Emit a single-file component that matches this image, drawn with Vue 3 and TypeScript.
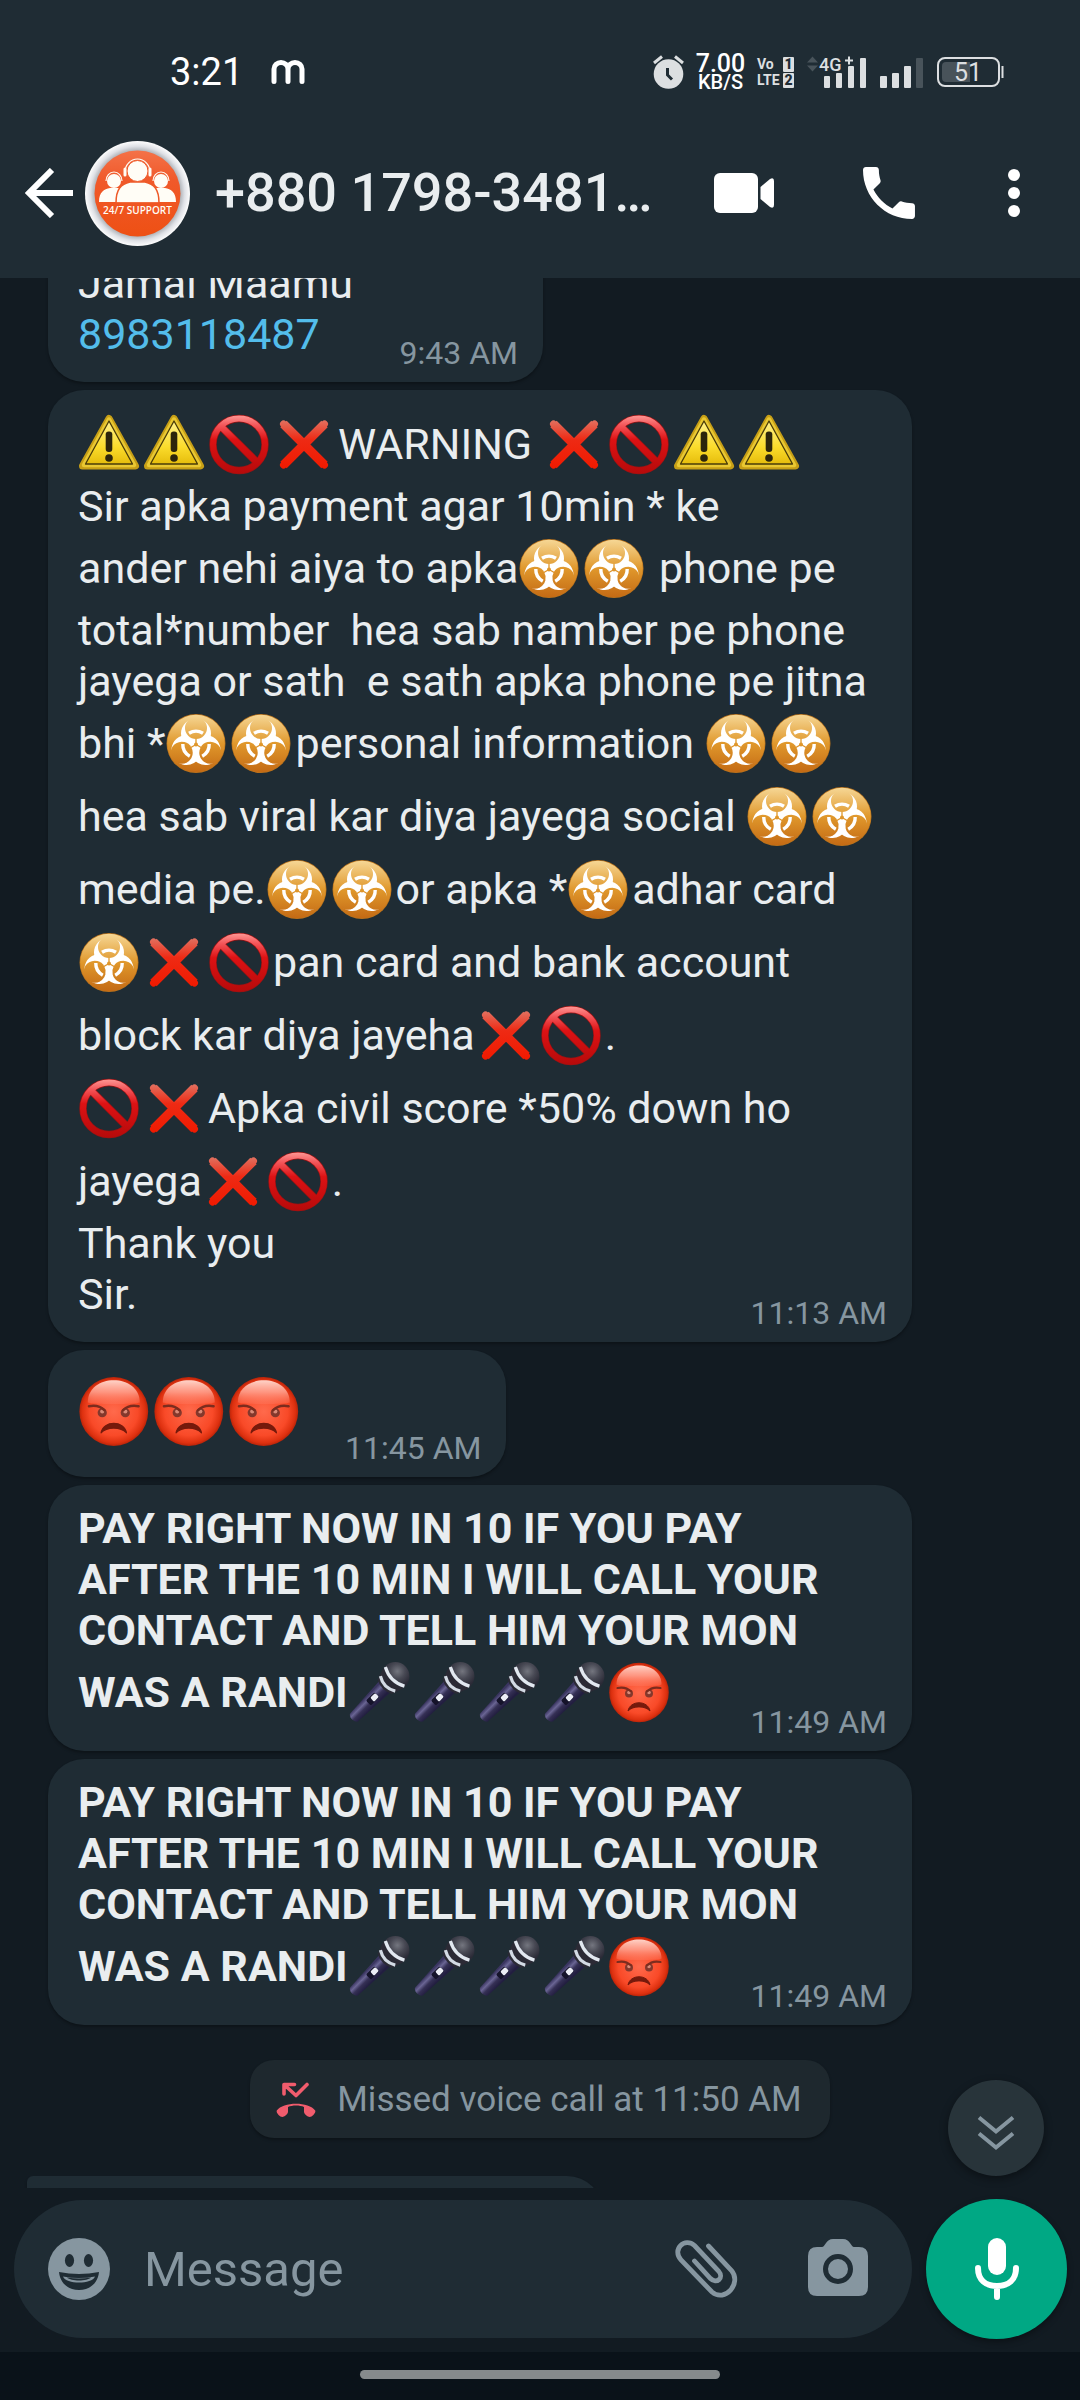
<script setup lang="ts">
type Token = { kind: 'text' | 'emoji'; value: string }
type Message = { id: number; lines: string[]; time: string; variant: string }

const emojiNames: Record<string, string> = {
  '⚠': 'warning',
  '🚫': 'prohibited',
  '❌': 'cross',
  '☣': 'biohazard',
  '😡': 'angry',
  '🎤': 'microphone',
}

const payNow: string[] = [
  'PAY RIGHT NOW IN 10 IF YOU PAY',
  'AFTER THE 10 MIN I WILL CALL YOUR',
  'CONTACT AND TELL HIM YOUR MON',
  'WAS A RANDI🎤🎤🎤🎤😡',
]

const messages: Message[] = [
  {
    id: 1,
    variant: 'wide',
    time: '11:13 AM',
    lines: [
      '⚠⚠🚫❌WARNING ❌🚫⚠⚠',
      'Sir apka payment agar 10min * ke',
      'ander nehi aiya to apka☣☣ phone pe',
      'total*number  hea sab namber pe phone',
      'jayega or sath  e sath apka phone pe jitna',
      'bhi *☣☣personal information ☣☣',
      'hea sab viral kar diya jayega social ☣☣',
      'media pe.☣☣or apka *☣adhar card',
      '☣❌🚫pan card and bank account',
      'block kar diya jayeha❌🚫.',
      '🚫❌Apka civil score *50% down ho',
      'jayega❌🚫.',
      'Thank you',
      'Sir.',
    ],
  },
  { id: 2, variant: 'large', time: '11:45 AM', lines: ['😡😡😡'] },
  { id: 3, variant: 'wide bold', time: '11:49 AM', lines: payNow },
  { id: 4, variant: 'wide bold', time: '11:49 AM', lines: payNow },
]

function tokenize(line: string): Token[] {
  return line
    .split(/(⚠|🚫|❌|☣|😡|🎤)/u)
    .filter((part) => part.length > 0)
    .map((part) => ({
      kind: part in emojiNames ? 'emoji' : 'text',
      value: emojiNames[part] ?? part,
    }))
}
</script>

<template>
  <div class="app">
    <svg class="sprite" aria-hidden="true">
      <defs>
        <linearGradient id="g-yellow" x1="0" y1="0" x2="0" y2="1">
          <stop offset="0" stop-color="#fff08a" /><stop offset=".6" stop-color="#fbdc2c" /><stop offset="1" stop-color="#e6bd0c" />
        </linearGradient>
        <linearGradient id="g-ban" gradientUnits="userSpaceOnUse" x1="0" y1="-30" x2="0" y2="30">
          <stop offset="0" stop-color="#ff9c98" /><stop offset=".18" stop-color="#f4565a" /><stop offset=".42" stop-color="#dd1214" /><stop offset="1" stop-color="#b50a0a" />
        </linearGradient>
        <linearGradient id="g-cross" gradientUnits="userSpaceOnUse" x1="0" y1="-24" x2="0" y2="24">
          <stop offset="0" stop-color="#e2705f" /><stop offset=".4" stop-color="#ee2a14" /><stop offset="1" stop-color="#f01a00" />
        </linearGradient>
        <linearGradient id="g-bio" x1="0" y1="0" x2="0" y2="1">
          <stop offset="0" stop-color="#f6d795" /><stop offset=".5" stop-color="#e0982c" /><stop offset="1" stop-color="#c46a14" />
        </linearGradient>
        <radialGradient id="g-face" cx=".5" cy=".5" r=".5">
          <stop offset="0" stop-color="#ff6a4c" /><stop offset=".7" stop-color="#f94a28" /><stop offset=".92" stop-color="#dd300f" /><stop offset="1" stop-color="#b92409" />
        </radialGradient>
        <linearGradient id="g-shine" x1="0" y1="0" x2="0" y2="1">
          <stop offset="0" stop-color="#ffd3c8" /><stop offset=".5" stop-color="#ffa28f" stop-opacity=".85" /><stop offset="1" stop-color="#ff7a60" stop-opacity=".35" />
        </linearGradient>
        <linearGradient id="g-handle" gradientUnits="userSpaceOnUse" x1="-6" y1="0" x2="6" y2="0">
          <stop offset="0" stop-color="#3a3560" /><stop offset=".3" stop-color="#6a6594" /><stop offset=".6" stop-color="#353055" /><stop offset="1" stop-color="#221e40" />
        </linearGradient>
        <radialGradient id="g-head" gradientUnits="userSpaceOnUse" cx="-2" cy="-28" r="15">
          <stop offset="0" stop-color="#74767f" /><stop offset=".5" stop-color="#484954" /><stop offset="1" stop-color="#2a2a36" />
        </radialGradient>
        <mask id="horns" maskUnits="userSpaceOnUse" x="-30" y="-30" width="60" height="60">
          <g fill="#fff">
            <circle cx="0" cy="-11" r="15" />
            <circle cx="0" cy="-11" r="15" transform="rotate(120)" />
            <circle cx="0" cy="-11" r="15" transform="rotate(240)" />
          </g>
          <g fill="#000">
            <circle cx="0" cy="-16.500" r="11" />
            <circle cx="0" cy="-16.500" r="11" transform="rotate(120)" />
            <circle cx="0" cy="-16.500" r="11" transform="rotate(240)" />
            <circle r="2" />
            <path d="M-.7-6H.7v6H-.7z" />
            <path d="M-.7-6H.7v6H-.7z" transform="rotate(120)" />
            <path d="M-.7-6H.7v6H-.7z" transform="rotate(240)" />
          </g>
        </mask>

        <symbol id="e-warning" viewBox="-31 -36.5 65 73">
          <path d="M0-26 26.5 21.5h-53z" fill="#c79f16" stroke="#c79f16" stroke-width="7" stroke-linejoin="round" />
          <path d="M0-25 25 20.5h-50z" fill="#ffe04a" stroke="#e9c832" stroke-width="4.5" stroke-linejoin="round" />
          <path d="M0-23.500 23.500 19.500h-47z" fill="url(#g-yellow)" stroke="#4a3c08" stroke-width="1.300" stroke-linejoin="round" />
          <rect x="-3.300" y="-13" width="6.600" height="20.500" rx="3" fill="#2c250c" />
          <circle cx="0" cy="13.500" r="3.800" fill="#2c250c" />
        </symbol>
        <symbol id="e-prohibited" viewBox="-31 -36.5 65 73">
          <g fill="none">
            <circle r="26" stroke="#9c1212" stroke-width="7.400" />
            <path d="M-18-18 18 18" stroke="#9c1212" stroke-width="8" />
            <path d="M-18-18 18 18" stroke="url(#g-ban)" stroke-width="6.600" />
            <circle r="26" stroke="url(#g-ban)" stroke-width="6" />
          </g>
        </symbol>
        <symbol id="e-cross" viewBox="-31 -36.5 65 73">
          <path d="M-20.500-20.500 20.500 20.500M20.500-20.500-20.500 20.500" stroke="url(#g-cross)" stroke-width="9" stroke-linecap="butt" />
          <path d="M-20.500-20.500 20.500 20.500M20.500-20.500-20.500 20.500" stroke="url(#g-cross)" stroke-width="7" stroke-linecap="round" />
        </symbol>
        <symbol id="e-biohazard" viewBox="-31 -36.5 65 73">
          <circle r="29.500" fill="#b8721c" />
          <circle r="28.800" fill="url(#g-bio)" />
          <g transform="translate(0 1)">
            <rect x="-30" y="-30" width="60" height="60" fill="#fff" mask="url(#horns)" />
            <g fill="none" stroke="#fff" stroke-width="3.400">
              <path d="M-7-11.200A13.200 13.200 0 0 1 7-11.200" />
              <path d="M-7-11.200A13.200 13.200 0 0 1 7-11.200" transform="rotate(120)" />
              <path d="M-7-11.200A13.200 13.200 0 0 1 7-11.200" transform="rotate(240)" />
            </g>
          </g>
        </symbol>
        <symbol id="e-angry" viewBox="-31 -36.5 65 73">
          <circle r="29.800" fill="url(#g-face)" />
          <path d="M-22.500-8C-22.500-20-12-27 0-27s22.500 7 22.500 19c0 2-45 2-45 0z" fill="url(#g-shine)" />
          <g fill="#84382c">
            <circle cx="-10" cy="1" r="4" />
            <circle cx="10" cy="1" r="4" />
          </g>
          <g fill="#d98a78">
            <circle cx="-10" cy="0" r="1.800" />
            <circle cx="10" cy="0" r="1.800" />
          </g>
          <path d="M-21.500-4.500c5-1 10 0 13.500 3.500M21.500-4.500c-5-1-10 0-13.500 3.500" fill="none" stroke="#7c2c1e" stroke-width="2.200" stroke-linecap="round" />
          <path d="M-11 18.500C-9 7.500 9 7.500 11 18.500 6 13-6 13-11 18.500z" fill="#761a0c" stroke="#761a0c" stroke-linejoin="round" />
        </symbol>
        <symbol id="e-microphone" viewBox="-31 -36.5 65 73">
          <g transform="rotate(45)">
            <path d="M-8-11H8L5.500 35c-.5 4-10.500 4-11 0z" fill="url(#g-handle)" />
            <rect x="-3.500" y="3" width="7" height="12" rx="1.500" fill="#15132a" />
            <rect x="-2.500" y="3" width="5.500" height="7" rx="1.500" fill="#eceef6" />
            <circle cx="0" cy="-23" r="14.200" fill="url(#g-head)" />
            <path d="M-14-20h28l-4 12q-10 5-20 0z" fill="#2b2a35" />
            <path d="M-13.500-22.500Q0-15 13.500-22.500" fill="none" stroke="#e2e8f0" stroke-width="3.200" />
            <path d="M-10.500-12.500Q0-6 10.500-12.500" fill="none" stroke="#d3dae4" stroke-width="3.200" />
          </g>
        </symbol>
      </defs>
    </svg>

    <header class="top">
      <div class="status">
        <div class="status-left">
          <span class="clock">3:21</span>
          <svg width="34" height="24" viewBox="-1 0 34 24" fill="none" stroke="#fff" stroke-width="5" stroke-linecap="round" stroke-linejoin="round">
            <path d="M2 21.500V9a7 6.500 0 0 1 14 0v12.500M16 9a7 6.500 0 0 1 14 0v12.500" />
          </svg>
        </div>
        <div class="status-right">
          <svg width="31" height="34" viewBox="0 0 31 34">
            <circle cx="15.500" cy="19" r="14.800" fill="#dcdfe1" />
            <path d="M1 8 9 1.500M30 8 22 1.500" stroke="#dcdfe1" stroke-width="3" />
            <path d="M14.500 13v7l4.500 4.500" fill="none" stroke="#1f2c34" stroke-width="3" />
          </svg>
          <div class="speed"><span class="rate">7.00</span><span class="unit">KB/S</span></div>
          <div class="volte">
            <span>Vo</span><b>1</b>
            <span>LTE</span><b>2</b>
          </div>
          <div class="mobile">
            <span class="net">4G</span>
            <svg width="60" height="34" viewBox="0 0 60 34" fill="#dcdfe1">
              <path d="M0 7.500 5.500 1.500 11 7.500zM0 10.500h11l-5.500 6z" fill="#48535a" />
              <path d="M38 5.500h8M42 1.500v8" stroke="#dcdfe1" stroke-width="2" />
              <rect x="17" y="21" width="6" height="12" rx="1" />
              <rect x="29" y="18" width="6" height="15" rx="1" />
              <rect x="41" y="11" width="6" height="22" rx="1" />
              <rect x="53" y="3" width="6" height="30" rx="1" />
            </svg>
          </div>
          <svg width="44" height="34" viewBox="0 0 44 34" fill="#dcdfe1">
            <rect x="0" y="21" width="7" height="12" rx="1" />
            <rect x="12" y="18" width="7" height="15" rx="1" />
            <rect x="24" y="11" width="7" height="22" rx="1" />
            <rect x="36" y="3" width="7" height="30" rx="1" fill="#48535a" />
          </svg>
          <svg width="67" height="30" viewBox="0 0 67 30">
            <rect x="1" y="1" width="61" height="28" rx="7" fill="none" stroke="#dcdfe1" stroke-width="2" />
            <path d="M9 5h24v20H9a4 4 0 0 1-4-4V9a4 4 0 0 1 4-4z" fill="#48535a" />
            <path d="M65.500 9v12" stroke="#dcdfe1" stroke-width="2" />
            <text x="31" y="24" text-anchor="middle" class="level">51</text>
          </svg>
        </div>
      </div>

      <div class="contact">
        <button type="button" aria-label="Back">
          <svg width="48" height="50" viewBox="0 0 48 50" fill="none" stroke="#fff" stroke-width="6">
            <path d="M48 25H5M27 2 4 25l23 23" />
          </svg>
        </button>
        <svg class="avatar" width="105" height="105" viewBox="0 0 105 105">
          <defs>
            <radialGradient id="g-rim" cx=".5" cy=".5" r=".5">
              <stop offset=".8" stop-color="#a9adb2" /><stop offset=".9" stop-color="#dfe1e6" /><stop offset="1" stop-color="#fdfdfd" />
            </radialGradient>
            <linearGradient id="g-orange" x1="0" y1="0" x2="0" y2="1">
              <stop offset="0" stop-color="#f47248" /><stop offset=".35" stop-color="#f0592a" /><stop offset="1" stop-color="#ee5014" />
            </linearGradient>
          </defs>
          <circle cx="52.500" cy="52.500" r="52.500" fill="url(#g-rim)" />
          <circle cx="52.500" cy="52.500" r="43" fill="url(#g-orange)" />
          <g fill="#fffdf6">
            <path d="M14 61c0-10 5-13 11-14h8c5 1 8 5 9 14zM63 61c1-9 4-13 9-14h8c6 1 11 4 11 14z" />
            <circle cx="29" cy="40" r="7" />
            <circle cx="76" cy="40" r="7" />
            <path d="M31 62c0-14 5-19 14-21h15c9 2 14 7 14 21z" stroke="#ee5a28" stroke-width="1.500" />
            <circle cx="52.500" cy="30" r="10.500" stroke="#ee5a28" />
          </g>
          <path d="M12 61.500h81v3H12z" fill="#ef5622" />
          <g fill="none" stroke="#fffdf6" stroke-width="1.200">
            <path d="M40 31a12.500 13 0 0 1 25 0M21 40a8 9 0 0 1 16 0M68 40a8 9 0 0 1 16 0" />
          </g>
          <path d="M40 28v6M65 28v6" stroke="#fffdf6" stroke-width="3" stroke-linecap="round" />
          <text x="52.500" y="73" text-anchor="middle" class="badge">24/7 SUPPORT</text>
        </svg>
        <h1>+880 1798-3481…</h1>
        <div class="actions">
          <button type="button" aria-label="Video call">
            <svg width="60" height="40" viewBox="0 0 60 40" fill="#fff">
              <rect width="44" height="40" rx="6" />
              <path d="M46.500 14 56 6q4-2 4 2v24q0 4-4 2l-9.500-8z" />
            </svg>
          </button>
          <button type="button" aria-label="Voice call">
            <svg width="56" height="52" viewBox="3 3 19.400 18" fill="#fff">
              <path d="M6.620 10.790c1.440 2.830 3.760 5.140 6.590 6.590l2.200-2.200c.27-.27.67-.36 1.020-.24 1.120.37 2.330.57 3.570.57.55 0 1 .45 1 1V20c0 .55-.45 1-1 1-9.390 0-17-7.610-17-17 0-.55.45-1 1-1h3.500c.55 0 1 .45 1 1 0 1.250.2 2.450.57 3.570.11.35.03.74-.25 1.020l-2.200 2.200z" />
            </svg>
          </button>
          <button type="button" aria-label="More options">
            <svg width="12" height="50" viewBox="0 0 12 50" fill="#fff">
              <circle cx="6" cy="7" r="6" /><circle cx="6" cy="25" r="6" /><circle cx="6" cy="43" r="6" />
            </svg>
          </button>
        </div>
      </div>
    </header>

    <main class="chat">
      <div class="bubble shared">
        <div class="body">
          <div class="line">Jamal Maamu</div>
          <div class="line"><a href="tel:8983118487">8983118487</a></div>
        </div>
        <time>9:43 AM</time>
      </div>

      <div v-for="message in messages" :key="message.id" class="bubble" :class="message.variant">
        <div class="body">
          <div v-for="(line, row) in message.lines" :key="row" class="line">
            <template v-for="(token, index) in tokenize(line)" :key="index"
              ><svg v-if="token.kind === 'emoji'" class="emoji" role="img" :aria-label="token.value"><use :href="'#e-' + token.value" /></svg
              ><template v-else>{{ token.value }}</template></template
            >
          </div>
        </div>
        <time>{{ message.time }}</time>
      </div>

      <div class="notice">
        <svg width="40" height="36" viewBox="0 0 40 36">
          <path d="M8 12V2.500h10.500M8.500 3 20 13.500 31 2.500" fill="none" stroke="#f15c6d" stroke-width="3.600" stroke-linecap="round" stroke-linejoin="round" />
          <path d="M.8 28.500C7 19.500 33 19.500 39.200 28.500c1 2-3 6.500-5.500 6.500-2 0-5.500-3-5.700-5v-5c-4-2-12-2-16 0v5c-.2 2-3.700 5-5.700 5C3.800 35-.2 30.500.8 28.500z" fill="#f15c6d" />
        </svg>
        <span>Missed voice call at 11:50 AM</span>
      </div>

      <div class="peek"><div class="bubble next"></div></div>

      <button type="button" class="jump" aria-label="Scroll to latest">
        <svg width="38" height="36" viewBox="0 0 38 36" fill="none" stroke="#8696a0" stroke-width="4">
          <path d="M2 2.500 19 16.500 36 2.500M2 18.500 19 32.500 36 18.500" />
        </svg>
      </button>
    </main>

    <form class="composer" @submit.prevent>
      <div class="field">
        <button type="button" aria-label="Emoji">
          <svg width="62" height="62" viewBox="0 0 62 62">
            <circle cx="31" cy="31" r="31" fill="#8696a0" />
            <g fill="#1f2c34">
              <ellipse cx="21.500" cy="22.500" rx="4.600" ry="6.500" />
              <ellipse cx="40.500" cy="22.500" rx="4.600" ry="6.500" />
              <path d="M11 34q20 4 40 0c-1 11-9 18-20 18s-19-7-20-18z" />
            </g>
            <path d="M15 38.500q16 3 32 0c-3 8-29 8-32 0z" fill="#8696a0" />
            <path d="M19 39.500q12 2 24 0c-4 4-20 4-24 0z" fill="#1f2c34" />
          </svg>
        </button>
        <input type="text" placeholder="Message" aria-label="Message" />
        <button type="button" aria-label="Attach">
          <svg width="64" height="58" viewBox="0 0 64 58" fill="none" stroke="#8696a0" stroke-width="4.800" stroke-linecap="round">
            <path d="M34.500 6 57.500 30.500C68 43 51 63 38 52L7 20C-2.500 9 11 -3 20.500 5.500L44.500 31C50.500 38 42.500 44.500 36.500 38.500L20.500 21" />
          </svg>
        </button>
        <button type="button" aria-label="Camera">
          <svg width="60" height="60" viewBox="0 0 60 60">
            <path d="M9 8h5c3 0 4-8 11-8h10c7 0 8 8 11 8h5q9 0 9 9v31q0 9-9 9H9q-9 0-9-9V17q0-9 9-9z" fill="#8696a0" />
            <circle cx="30" cy="30" r="12.500" fill="none" stroke="#1f2c34" stroke-width="5" />
          </svg>
        </button>
      </div>
      <button type="button" class="voice" aria-label="Record voice message">
        <svg width="44" height="62" viewBox="0 0 44 62">
          <rect x="13" width="18" height="37" rx="9" fill="#fff" />
          <path d="M3 30c0 12 8 18 19 18s19-6 19-18M22 48v11" fill="none" stroke="#fff" stroke-width="6" stroke-linecap="round" />
        </svg>
      </button>
    </form>

    <nav class="gesture" aria-label="System navigation"><span></span></nav>
  </div>
</template>

<style>
body {
  margin: 0;
  background: #121b22;
}
</style>

<style scoped>
.app {
  display: flex;
  flex-direction: column;
  height: 100vh;
  background: #121b22;
  color: #e9edef;
  font-family: Roboto, "Liberation Sans", sans-serif;
}
.sprite {
  position: absolute;
  width: 0;
  height: 0;
}
svg {
  display: block;
  flex: none;
}
button {
  display: block;
  flex: none;
  padding: 0;
  border: 0;
  background: none;
}
.top {
  flex: none;
  background: #1f2c34;
}
.status {
  display: flex;
  align-items: center;
  justify-content: space-between;
  height: 72px;
  padding: 36px 76px 0 170px;
}
.status-left {
  display: flex;
  align-items: center;
  gap: 28px;
}
.clock {
  color: #fff;
  font-size: 38px;
  line-height: 44px;
}
.status-right {
  display: flex;
  align-items: center;
  gap: 13px;
}
.speed {
  display: flex;
  flex-direction: column;
  align-items: center;
  width: 47px;
  color: #fff;
  font-weight: 500;
}
.rate {
  font-size: 25px;
  line-height: 20px;
}
.unit {
  font-size: 20px;
  line-height: 16px;
}
.volte {
  display: grid;
  grid-template-columns: 25px 11px;
  gap: 1px;
  width: 37px;
  color: #dcdfe1;
  font-size: 14px;
  font-weight: 700;
  line-height: 15px;
}
.volte b {
  border-radius: 1px;
  background: #dcdfe1;
  color: #1f2c34;
  text-align: center;
}
.mobile {
  display: grid;
}
.mobile > * {
  grid-area: 1 / 1;
}
.net {
  padding-left: 12px;
  color: #dcdfe1;
  font-size: 18px;
  font-weight: 500;
  line-height: 20px;
}
.level {
  fill: #dcdfe1;
  font-size: 25px;
}
.contact {
  display: flex;
  align-items: center;
  height: 170px;
  padding: 0 60px 0 25px;
}
.avatar {
  margin: 0 25px 0 12px;
}
.badge {
  fill: #fffdf6;
  font-family: "Open Sans", sans-serif;
  font-size: 10px;
  font-weight: 600;
}
h1 {
  flex: 1;
  min-width: 0;
  margin: 0;
  overflow: hidden;
  font-size: 54px;
  font-weight: 500;
  line-height: 64px;
  white-space: nowrap;
}
.actions {
  display: flex;
  align-items: center;
  gap: 89px;
}
.chat {
  position: relative;
  display: flex;
  flex: 1;
  flex-direction: column;
  align-items: flex-start;
  justify-content: flex-end;
  min-height: 0;
  overflow: hidden;
}
.bubble {
  display: grid;
  flex: none;
  box-sizing: border-box;
  margin: 0 0 8px 48px;
  padding: 18px 25px 10px 30px;
  border-radius: 36px;
  background: #1f2c34;
  box-shadow: 0 2px 3px rgba(0, 0, 0, 0.3);
}
.bubble.wide {
  width: 80%;
}
.body,
time {
  grid-area: 1 / 1;
}
.body {
  margin-bottom: 12px;
}
.line {
  font-size: 43px;
  line-height: 51px;
  white-space: pre;
}
.bold .line {
  font-weight: 700;
}
.emoji {
  display: inline-block;
  width: 65px;
  height: 73px;
  vertical-align: -22px;
}
time {
  align-self: end;
  justify-self: end;
  color: #8696a0;
  font-size: 32px;
  line-height: 38px;
}
.bubble.shared,
.bubble.large {
  display: flex;
  justify-content: space-between;
  gap: 42px;
}
.bubble.shared {
  min-width: 495px;
}
.large .line {
  display: flex;
}
.large .emoji {
  width: 75px;
  height: 87px;
}
a {
  color: #53bdeb;
  text-decoration: none;
}
.notice {
  display: flex;
  flex: none;
  align-items: center;
  align-self: center;
  gap: 21px;
  box-sizing: border-box;
  height: 78px;
  margin: 27px 0 38px;
  padding: 2px 28px 0 26px;
  border-radius: 24px;
  background: #1e282e;
  box-shadow: 0 2px 3px rgba(0, 0, 0, 0.3);
  color: #8696a0;
  font-size: 35px;
  line-height: 42px;
}
.peek {
  flex: none;
  height: 12px;
  overflow: hidden;
}
.bubble.next {
  width: 576px;
  height: 96px;
  margin: 0 0 0 27px;
  border-radius: 6px 36px 36px 36px;
}
.jump {
  position: absolute;
  right: 36px;
  bottom: 12px;
  display: flex;
  align-items: center;
  justify-content: center;
  width: 96px;
  height: 96px;
  padding-top: 10px;
  border-radius: 50%;
  background: #28343a;
  box-shadow: 0 3px 8px rgba(0, 0, 0, 0.4);
}
.composer {
  display: flex;
  flex: none;
  align-items: center;
  gap: 14px;
  padding: 11px 13px 13px 14px;
}
.field {
  display: flex;
  flex: 1;
  align-items: center;
  box-sizing: border-box;
  min-width: 0;
  height: 138px;
  padding: 0 44px 0 34px;
  border-radius: 69px;
  background: #1f2c34;
}
.field button:last-child {
  margin-left: 70px;
}
input {
  flex: 1;
  min-width: 0;
  height: 72px;
  margin: 0 16px 0 34px;
  padding: 0;
  border: 0;
  outline: 0;
  background: none;
  color: #e9edef;
  font-family: inherit;
  font-size: 49px;
}
input::placeholder {
  color: #8696a0;
  opacity: 1;
}
.voice {
  display: flex;
  align-items: center;
  justify-content: center;
  width: 141px;
  height: 140px;
  border-radius: 50%;
  background: #00a884;
  box-shadow: 0 3px 6px rgba(0, 0, 0, 0.35);
}
.gesture {
  display: flex;
  flex: none;
  justify-content: center;
  box-sizing: border-box;
  height: 48px;
  padding-top: 18px;
  background: #0a1219;
}
.gesture span {
  width: 360px;
  height: 9px;
  border-radius: 5px;
  background: #868a8c;
}
</style>
